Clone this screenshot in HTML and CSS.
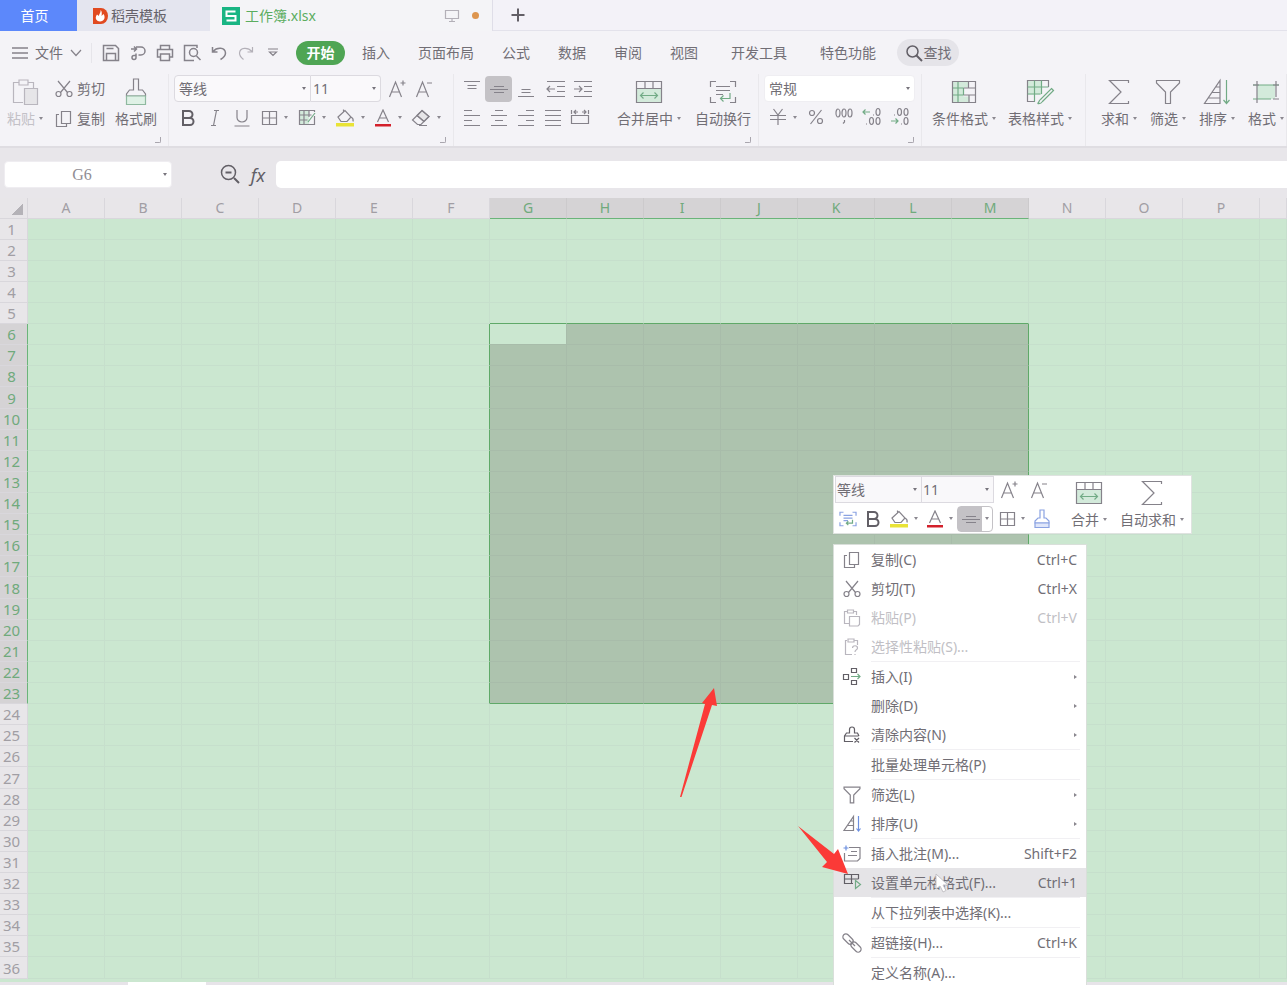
FILE: index.html
```html
<!DOCTYPE html>
<html lang="zh-CN">
<head>
<meta charset="utf-8">
<title>工作簿.xlsx</title>
<link rel="stylesheet" href="styles.css">
</head>
<body>
<svg class="defs" aria-hidden="true">
  <symbol id="i-copy" viewBox="0 0 18 18"><path d="M6.500 1.500h9v12h-9zM4 4.500H1.500v12h10v-3"/></symbol>
  <symbol id="i-cut" viewBox="0 0 18 18"><path d="M3 1l9.500 11.500M15 1L5.500 12.500"/><circle cx="3.500" cy="14" r="2.500"/><circle cx="14.500" cy="14" r="2.500"/></symbol>
  <symbol id="i-brush" viewBox="0 0 22 28"><path d="M8.500 1h5v11h4l3 4v2h-19v-2l3-4h4z"/><path class="pad" d="M1.500 18h19v8.500h-19z"/></symbol>
  <symbol id="i-bold" viewBox="0 0 18 18"><path class="thick" d="M4 2h6a3.500 3.500 0 0 1 0 7H4zM4 9h7a3.500 3.500 0 0 1 0 7H4z"/></symbol>
  <symbol id="i-grid" viewBox="0 0 18 18"><path d="M2.500 2.500h14v13h-14zM9.500 2.500v13M2.500 9h14"/></symbol>
  <symbol id="i-fill" viewBox="0 0 20 18"><path d="M3 8l7-6.500 6 6.500-4 4.500H6zM8.500 3V.5M16 8c2 1 2.500 2.500 2 4.500"/><path class="yellow" d="M1 14h18v3.500H1z"/></symbol>
  <symbol id="i-color" viewBox="0 0 18 18"><path d="M3.500 13L9 1l5.500 12M5.500 9h7"/><path class="red" d="M1 15h16v2.500H1z"/></symbol>
  <symbol id="i-up" viewBox="0 0 18 18"><path d="M1.500 17L7.500 2l6 15M3.500 12h8M12.500 3h5M15 .5v5"/></symbol>
  <symbol id="i-down" viewBox="0 0 18 18"><path d="M1.500 17L7.500 2l6 15M3.500 12h8M12 3h5"/></symbol>
  <symbol id="i-mid" viewBox="0 0 18 18"><path d="M4 6.500h10M0 9.500h18M4 12.500h10"/></symbol>
  <symbol id="i-merge" viewBox="0 0 28 24"><path class="mint" d="M1.500 9h25v13.500h-25z"/><path d="M1.500 1.500h25v21h-25zM1.500 8.500h25M10 1.500v7M18 1.500v7"/><path class="g" d="M5.500 15.500h17M8.500 12.500l-3 3 3 3M19.500 12.500l3 3-3 3"/></symbol>
  <symbol id="i-wrap" viewBox="0 0 28 24"><path d="M1.500 7V1.500H7M21 1.500h5.500V7M1.500 17v5.500H7M21 22.500h5.500V17M7 6.500h14M7 10.500h14M7 14.500h7"/><path class="g" d="M21 13v5.500H11.500M14.500 15.500l-3 3 3 3"/></symbol>
  <symbol id="i-sum" viewBox="0 0 24 26"><path d="M21.500 4V1.500H2.500L14 13 2.500 24.500h19V22"/></symbol>
  <symbol id="i-filter" viewBox="0 0 26 26"><path d="M1.500 1.500h23v2.500l-9 9v11.500h-5V13l-9-9z"/></symbol>
  <symbol id="i-sort" viewBox="0 0 28 26"><path d="M17 1.500v23H1.500zM13 8h4M9 13.500h8M5 19h12"/><path class="g" d="M23.500 1v23M20.500 21l3 3.500 3-3.500"/></symbol>
  <symbol id="i-paste" viewBox="0 0 27 28"><path d="M7 4.500H1.500v20H11M16 4.500h5.500V10M7 2h9v5H7z"/><path class="soft" d="M12.500 10.500H25.500v16h-13z"/></symbol>
</svg>

<div class="app">
  <header class="tabs">
    <button class="tab home">首页</button>
    <button class="tab docer"><svg width="16" height="18" viewBox="0 0 16 18"><path d="M1 1h8a7 8 0 0 1 0 16H1z" fill="#e14a20"/><path d="M8.500 3c.5 3-1.500 3.500-1.500 6L5 7.500c-3 4 0 7 3 7 4 0 6-4 3.500-7.500L9.500 9C10 6.500 10 4 8.500 3z" fill="#fff"/></svg>稻壳模板</button>
    <button class="tab book"><svg width="18" height="18" viewBox="0 0 18 18"><path d="M0 0h18v18H0z" fill="#19b583"/><path d="M13.500 4.500h-9V9h9v4.500h-9" fill="none" stroke="#fff" stroke-width="2"/></svg><span>工作簿.xlsx</span><svg class="ico pale" width="14" height="14" viewBox="0 0 14 14"><path d="M.5 1.500h13v8H.5zM7 9.500v3M4 12.500h6"/></svg><i class="dot"></i></button>
    <button class="plus" aria-label="新建"><svg class="ico dark" width="14" height="14" viewBox="0 0 14 14"><path d="M7 .5v13M.5 7h13" stroke-width="2"/></svg></button>
  </header>

  <nav class="menubar">
    <button class="file"><svg class="ico" width="16" height="12" viewBox="0 0 16 12"><path d="M0 1h16M0 6h16M0 11h16" stroke-width="1.500"/></svg>文件<svg class="ico" width="12" height="8" viewBox="0 0 12 8"><path d="M1 1l5 5.500L11 1"/></svg></button>
    <div class="quick">
      <button aria-label="保存"><svg class="ico" width="18" height="18" viewBox="0 0 18 18"><path d="M1.500 1.500h12l3 3v12h-15zM4.500 16.500v-7h9v7M4.500 4.500h7" stroke-width="1.500"/></svg></button>
      <button aria-label="输出"><svg class="ico" width="18" height="18" viewBox="0 0 18 18"><path d="M2 5h5M5 2.500L7.500 5 5 7.500M7 3h5a4 4 0 0 1 0 8H9.500M7 9.500v4a2 2 0 1 1-2-2h2" stroke-width="1.500"/></svg></button>
      <button aria-label="打印"><svg class="ico" width="18" height="18" viewBox="0 0 18 18"><path d="M4.500 5V1.500h9V5M4 13H1.500V5.500h15V13H14M4.500 10h9v6.500h-9z" stroke-width="1.500"/></svg></button>
      <button aria-label="打印预览"><svg class="ico" width="18" height="18" viewBox="0 0 18 18"><path d="M14 4V1.500H1.500v15H11M13.500 12l4 4" stroke-width="1.500"/><circle cx="10.500" cy="8.500" r="4" stroke-width="1.500"/></svg></button>
      <button aria-label="撤销"><svg class="ico" width="18" height="18" viewBox="0 0 18 18"><path d="M2.500 3v5h5M3 7.500C7 3 15 3 15.500 9c0 3-2.500 5-5 6.500" stroke-width="1.500"/></svg></button>
      <button aria-label="恢复"><svg class="ico pale" width="18" height="18" viewBox="0 0 18 18"><path d="M15.500 3v5h-5M15 7.500C11 3 3 3 2.500 9c0 3 2 5 4 6.500"/></svg></button>
      <button aria-label="更多"><svg class="ico" width="10" height="9" viewBox="0 0 10 9"><path d="M0 1h10M1.500 4L5 7.500 8.500 4z"/></svg></button>
    </div>
    <button class="start">开始</button>
    <div class="menus">
      <button>插入</button><button>页面布局</button><button>公式</button><button>数据</button><button>审阅</button><button>视图</button><button class="wide">开发工具</button><button class="wide">特色功能</button>
    </div>
    <button class="search"><svg class="ico dark" width="18" height="18" viewBox="0 0 18 18"><circle cx="7.500" cy="7.500" r="5.500" stroke-width="1.500"/><path d="M11.500 11.500l5.500 5.500" stroke-width="2"/></svg>查找</button>
  </nav>

  <section class="ribbon">
    <div class="group clip corner">
      <button class="big off"><svg class="ico" width="27" height="28"><use href="#i-paste"/></svg><span class="car">粘贴</span></button>
      <div class="stack"><button class="line"><svg class="ico" width="18" height="18"><use href="#i-cut"/></svg>剪切</button><button class="line"><svg class="ico" width="18" height="18"><use href="#i-copy"/></svg>复制</button></div>
      <button class="big"><svg class="ico" width="22" height="28"><use href="#i-brush"/></svg>格式刷</button>
    </div>

    <div class="group font corner">
      <div class="stack">
        <div class="row">
          <span class="combo family"><select aria-label="字体"><option>等线</option></select></span><span class="combo size"><select aria-label="字号"><option>11</option></select></span>
          <button class="tool" aria-label="增大字号"><svg class="ico" width="18" height="18"><use href="#i-up"/></svg></button>
          <button class="tool" aria-label="减小字号"><svg class="ico" width="18" height="18"><use href="#i-down"/></svg></button>
        </div>
        <div class="row">
          <button class="tool dark" aria-label="加粗"><svg class="ico" width="18" height="18"><use href="#i-bold"/></svg></button>
          <button class="tool" aria-label="倾斜"><svg class="ico" width="18" height="18" viewBox="0 0 18 18"><path d="M8 1.500h5M5 16.500h5M10.500 1.500l-3 15"/></svg></button>
          <button class="tool" aria-label="下划线"><svg class="ico" width="18" height="18" viewBox="0 0 18 18"><path d="M4 1v7.500a5 4.500 0 0 0 10 0V1M1.500 17h15"/></svg></button>
          <button class="tool car" aria-label="边框"><svg class="ico" width="18" height="18"><use href="#i-grid"/></svg></button>
          <button class="tool car" aria-label="绘制边框"><svg class="ico" width="18" height="18" viewBox="0 0 18 18"><path class="mint" d="M2 2h9v13H2z"/><path d="M16.500 7v8.500h-15v-14h15V3M1.500 6h12M1.500 11h8M6 1.500v14M11 1.500V8"/><path class="g" d="M17 4l-7 9"/></svg></button>
          <button class="tool car" aria-label="填充颜色"><svg class="ico" width="20" height="18"><use href="#i-fill"/></svg></button>
          <button class="tool car" aria-label="字体颜色"><svg class="ico" width="18" height="18"><use href="#i-color"/></svg></button>
          <button class="tool car" aria-label="清除"><svg class="ico" width="20" height="18" viewBox="0 0 20 18"><path class="soft" d="M11 1.500l7 6-5 5-7-6z"/><path d="M11 1.500l7 6-8 8H6.500l-5-4.500zM6 6.500l7 6M8 16.500h8"/></svg></button>
        </div>
      </div>
    </div>

    <div class="group align corner">
      <div class="stack">
        <div class="row">
          <button class="al" aria-label="顶端对齐"><svg class="ico" width="18" height="18" viewBox="0 0 18 18"><path d="M1 1.500h16M4.500 5.500h9M4.500 8.500h9"/></svg></button>
          <button class="al on" aria-label="垂直居中"><svg class="ico" width="18" height="18"><use href="#i-mid"/></svg></button>
          <button class="al" aria-label="底端对齐"><svg class="ico" width="18" height="18" viewBox="0 0 18 18"><path d="M4.500 9.500h9M4.500 12.500h9M1 16.500h16"/></svg></button>
          <button class="al indent" aria-label="减少缩进"><svg class="ico" width="18" height="18" viewBox="0 0 18 18"><path d="M0 1.500h18M10 6.500h8M10 11.500h8M0 16.500h18M0 9h8M3 6L0 9l3 3"/></svg></button>
          <button class="al" aria-label="增加缩进"><svg class="ico" width="18" height="18" viewBox="0 0 18 18"><path d="M0 1.500h18M10 6.500h8M10 11.500h8M0 16.500h18M0 9h8M5 6l3 3-3 3"/></svg></button>
        </div>
        <div class="row">
          <button class="al" aria-label="左对齐"><svg class="ico" width="18" height="18" viewBox="0 0 18 18"><path d="M1 1.500h8M1 6.500h16M1 11.500h8M1 16.500h16"/></svg></button>
          <button class="al" aria-label="居中"><svg class="ico" width="18" height="18" viewBox="0 0 18 18"><path d="M5 1.500h8M1 6.500h16M5 11.500h8M1 16.500h16"/></svg></button>
          <button class="al" aria-label="右对齐"><svg class="ico" width="18" height="18" viewBox="0 0 18 18"><path d="M9 1.500h8M1 6.500h16M9 11.500h8M1 16.500h16"/></svg></button>
          <button class="al" aria-label="两端对齐"><svg class="ico" width="18" height="18" viewBox="0 0 18 18"><path d="M1 1.500h16M1 6.500h16M1 11.500h16M1 16.500h16"/></svg></button>
          <button class="al" aria-label="分散对齐"><svg class="ico" width="18" height="18" viewBox="0 0 18 18"><path d="M.5 1v4M17.500 1v4M.5 6.500h17v8H.5zM3 3h4M11 3h4M5 1L3 3l2 2M13 1l2 2-2 2"/></svg></button>
        </div>
      </div>
      <button class="big"><svg class="ico" width="28" height="24"><use href="#i-merge"/></svg><span class="car">合并居中</span></button>
      <button class="big"><svg class="ico" width="28" height="24"><use href="#i-wrap"/></svg>自动换行</button>
    </div>

    <div class="group number corner">
      <div class="stack">
        <div class="row"><span class="combo format"><select aria-label="数字格式"><option>常规</option></select></span></div>
        <div class="row nums">
          <button class="tool car" aria-label="货币"><svg class="ico" width="18" height="18" viewBox="0 0 18 18"><path d="M4.500 0L9 6l4.500-6M1 6.500h16M1 10.500h16M9 6v10"/></svg></button>
          <button class="tool" aria-label="百分比"><svg class="ico" width="16" height="18" viewBox="0 0 16 18"><circle cx="4" cy="4" r="2.500"/><circle cx="12" cy="12" r="2.500"/><path d="M13.500 1l-11 14"/></svg></button>
          <button class="tool" aria-label="千位分隔"><svg class="ico" width="20" height="18" viewBox="0 0 20 18"><ellipse cx="4" cy="4" rx="2" ry="4"/><ellipse cx="10" cy="4" rx="2" ry="4"/><ellipse cx="16" cy="4" rx="2" ry="4"/><path d="M10.500 11v2L9 14.500"/></svg></button>
          <button class="tool" aria-label="增加小数位"><svg class="ico" width="20" height="20" viewBox="0 0 20 20"><path class="g" d="M1 4h7M3.500 1.500L1 4l2.500 2.500"/><path d="M11 7h1M4 16h1"/><ellipse cx="16" cy="4" rx="2" ry="3.500"/><ellipse cx="9.500" cy="13" rx="2" ry="3.500"/><ellipse cx="16" cy="13" rx="2" ry="3.500"/></svg></button>
          <button class="tool" aria-label="减少小数位"><svg class="ico" width="20" height="20" viewBox="0 0 20 20"><path class="g" d="M1 13h7M5.500 10.500L8 13l-2.500 2.500"/><path d="M4 7h1M11 16h1"/><ellipse cx="9.500" cy="4" rx="2" ry="3.500"/><ellipse cx="16" cy="4" rx="2" ry="3.500"/><ellipse cx="16" cy="13" rx="2" ry="3.500"/></svg></button>
        </div>
      </div>
    </div>

    <div class="group styles">
      <button class="big"><svg class="ico" width="26" height="24" viewBox="0 0 26 24"><path class="mint" d="M1.500 1.500h16v6h-5v9h6v6h-17z"/><path class="g" d="M1.500 8h11M1.500 15h11M7 1.500v21M12.500 8v7"/><path d="M1.500 1.500h23v21h-23zM17.500 1.500V8M12.500 8h12M12.500 15h12M18 15v7.500"/></svg><span class="car">条件格式</span></button>
      <button class="big"><svg class="ico" width="28" height="26" viewBox="0 0 28 26"><path class="mint" d="M1.500 1.500h14v14h-14z"/><path d="M9 22.500H1.500v-21h21V8"/><path class="g" d="M1.500 8h21M1.500 15h13M8.500 1.500v21M15.500 1.500V15M25.500 9.500l2 2-11 11c-2 3-4 2-5 2 2-1 1-3 3-4z"/></svg><span class="car">表格样式</span></button>
    </div>

    <div class="group edit">
      <button class="big"><svg class="ico" width="24" height="26"><use href="#i-sum"/></svg><span class="car">求和</span></button>
      <button class="big"><svg class="ico" width="26" height="26"><use href="#i-filter"/></svg><span class="car">筛选</span></button>
      <button class="big"><svg class="ico" width="28" height="26"><use href="#i-sort"/></svg><span class="car">排序</span></button>
      <button class="big"><svg class="ico" width="28" height="24" viewBox="0 0 28 24"><path class="mint" d="M5 5h18v14H5z"/><path class="g" d="M1 5h26M1 19h18"/><path d="M5 1v22M24 1v16M21 19h6M1 5h6M21 5h6"/></svg><span class="car">格式</span></button>
    </div>
  </section>

  <section class="formula">
    <span class="combo name"><input aria-label="名称框" value="G6"></span>
    <button class="zoomer" aria-label="缩小"><svg class="ico dark" width="20" height="20" viewBox="0 0 20 20"><circle cx="8.500" cy="7.500" r="7" stroke-width="1.500"/><path d="M14 13l5 5M5.500 7.500h6" stroke-width="2"/></svg></button>
    <button class="fx">fx</button>
    <input class="entry" aria-label="编辑栏">
  </section>

  <main class="work">
    <div class="viewport"><table class="sheet"><thead></thead><tbody></tbody></table></div>
    <footer class="sheets"><div class="sheet-tab"></div></footer>

    <div class="mini">
      <div class="stack">
        <div class="row"><span class="combo mfont"><select aria-label="浮动字体"><option>等线</option></select></span><span class="combo msize"><select aria-label="浮动字号"><option>11</option></select></span>
          <button class="tool" aria-label="增大"><svg class="ico" width="18" height="18"><use href="#i-up"/></svg></button>
          <button class="tool" aria-label="减小"><svg class="ico" width="18" height="18"><use href="#i-down"/></svg></button></div>
        <div class="row">
          <button class="tool" aria-label="换行"><svg class="ico blue" width="18" height="16"><use href="#i-wrap"/></svg></button>
          <button class="tool dark" aria-label="粗体"><svg class="ico" width="18" height="18"><use href="#i-bold"/></svg></button>
          <button class="tool car" aria-label="填充"><svg class="ico" width="20" height="18"><use href="#i-fill"/></svg></button>
          <button class="tool car" aria-label="颜色"><svg class="ico" width="18" height="18"><use href="#i-color"/></svg></button>
          <button class="tool car on" aria-label="对齐"><svg class="ico" width="18" height="18"><use href="#i-mid"/></svg></button>
          <button class="tool car" aria-label="框线"><svg class="ico" width="18" height="18"><use href="#i-grid"/></svg></button>
          <button class="tool" aria-label="格式刷"><svg class="ico blue" width="16" height="20" viewBox="0 0 16 20"><path d="M6 1h4v8h2l3 3v2H1v-2l3-3h2z"/><path d="M1 14h14v4.500H1z" fill="#dfe6fa"/></svg></button>
        </div>
      </div>
      <button class="big"><svg class="ico" width="28" height="24"><use href="#i-merge"/></svg><span class="car">合并</span></button>
      <button class="big"><svg class="ico" width="24" height="26"><use href="#i-sum"/></svg><span class="car">自动求和</span></button>
    </div>

    <div class="menu" role="menu">
      <button role="menuitem"><svg class="ico" width="18" height="18"><use href="#i-copy"/></svg><span>复制(C)</span><kbd>Ctrl+C</kbd></button>
      <button role="menuitem"><svg class="ico" width="18" height="18"><use href="#i-cut"/></svg><span>剪切(T)</span><kbd>Ctrl+X</kbd></button>
      <button role="menuitem" class="off"><svg class="ico" width="18" height="18" viewBox="0 0 18 18"><path d="M5 2.500H1.500v12H6M10 2.500h3.500V6M4.500 1h6v3h-6zM6.500 7.500h10v8l-1.500 1.500h-8.500z"/></svg><span>粘贴(P)</span><kbd>Ctrl+V</kbd></button>
      <button role="menuitem" class="off"><svg class="ico" width="18" height="18" viewBox="0 0 18 18"><path d="M4 2.500H2.500v14H9M11 2.500h3.500V7M5 1h6v3H5zM9.500 10c0-3 5-3 5 0 0 2-2.500 1.500-2.500 4M12 16v1"/></svg><span>选择性粘贴(S)...</span></button>
      <hr>
      <button role="menuitem"><svg class="ico dark" width="18" height="18" viewBox="0 0 18 18"><path d="M8.500.5h5v4h-5zM.5 6.500h5v5h-5zM8.500 12.500h5v4h-5z"/><path class="g" d="M8 8.500h9M14.500 6l2.500 2.500-2.500 2.500"/></svg><span>插入(I)</span><b></b></button>
      <button role="menuitem"><i></i><span>删除(D)</span><b></b></button>
      <button role="menuitem"><svg class="ico dark" width="18" height="18" viewBox="0 0 18 18"><path d="M10 15.500H1.500V10l2-3h3V3.500a2.500 2.500 0 0 1 5 0V7h3l1.500 3M1.500 10h14M11.500 12l4.500 4.500M16 12l-4.500 4.500"/></svg><span>清除内容(N)</span><b></b></button>
      <hr>
      <button role="menuitem"><i></i><span>批量处理单元格(P)</span></button>
      <hr>
      <button role="menuitem"><svg class="ico" width="18" height="18"><use href="#i-filter"/></svg><span>筛选(L)</span><b></b></button>
      <button role="menuitem"><svg class="ico" width="18" height="18" viewBox="0 0 18 18"><path d="M10.500 1.500v14H1zM7.500 6h3M5 10.500h5.500"/><path class="b" d="M15.500 1v15M13.500 13.500l2 2.500 2-2.500"/></svg><span>排序(U)</span><b></b></button>
      <hr>
      <button role="menuitem"><svg class="ico" width="18" height="18" viewBox="0 0 18 18"><path d="M6 2.500h11v11L14.500 16H1.500V8M8 6.500h6M5 10.500h9"/><path class="b" d="M3 .5v5M.5 3h5"/></svg><span>插入批注(M)...</span><kbd>Shift+F2</kbd></button>
      <button role="menuitem" class="hot"><svg class="ico dark" width="20" height="18" viewBox="0 0 20 18"><path d="M10 9.500H1.500v-9h14V5M8.500.5v9M1.500 5h14"/><path class="g" d="M12.500 6.500l5 4-5 4z"/></svg><span>设置单元格格式(F)...</span><kbd>Ctrl+1</kbd></button>
      <hr>
      <button role="menuitem"><i></i><span>从下拉列表中选择(K)...</span></button>
      <hr>
      <button role="menuitem"><svg class="ico" width="18" height="18" viewBox="0 0 18 18"><rect x="-1" y="2" width="12" height="6" rx="3" transform="rotate(45 5 5)"/><rect x="7" y="10" width="12" height="6" rx="3" transform="rotate(45 13 13)"/><path d="M6 6l6 6"/></svg><span>超链接(H)...</span><kbd>Ctrl+K</kbd></button>
      <hr>
      <button role="menuitem"><i></i><span>定义名称(A)...</span></button>
    </div>

    <svg class="mark one" width="40" height="112" viewBox="0 0 40 112"><path d="M0 109L25 16l-3-1L34 0l3 18-5-1L1.500 109z" fill="#fb3a37"/></svg>
    <svg class="mark two" width="52" height="50" viewBox="0 0 52 50"><path d="M1 0l36 28 4-5 10 25-26-7 5-5z" fill="#fb3a37"/></svg>
    <svg class="mark pointer" width="14" height="20" viewBox="0 0 14 20"><path d="M1 1v15l4-3 3 6 3-1.500L8 12h5z" fill="#fff" stroke="#c3c1c5"/></svg>
  </main>
</div>
<script src="sheet.js"></script>
</body>
</html>
```

FILE: styles.css
```css
* { box-sizing: border-box; }
body { margin: 0; background: #f4f3f7; color: #716e75; font: 14px/20px "Noto Sans", "Noto Sans CJK SC", sans-serif; }
button, select, input { font: inherit; color: inherit; border: 0; background: none; padding: 0; margin: 0; }
button { display: flex; align-items: center; justify-content: center; white-space: nowrap; }
svg { flex: none; }
.defs { position: absolute; width: 0; height: 0; }
.app { display: flex; flex-direction: column; height: 100vh; overflow: hidden; }

.ico { fill: none; stroke: #85828a; stroke-width: 1.2; overflow: visible; }
.ico * { vector-effect: non-scaling-stroke; }
symbol * { vector-effect: non-scaling-stroke; }
.ico.dark, .dark .ico { stroke: #625f66; }
.ico.pale { stroke: #b3b0b8; }
.thick { stroke-width: 2; }
.g { fill: none; stroke: #72ab86; }
.b { stroke: #6c8fe0; }
.mint { fill: #d3eadb; stroke: none; }
.pad { fill: #dff1e6; stroke: #8fb9a0; }
.soft { fill: #e6e5e8; }
.yellow { fill: #e9e336; stroke: none; }
.red { fill: #d3202b; stroke: none; }
.ico.blue { stroke: #8aa2e2; }

/* document tabs */
.tabs { display: flex; height: 31px; flex: none; background: #f3f2f8; border-bottom: 1px solid #e3e2eb; }
.tab { height: 31px; }
.home { width: 77px; padding-right: 8px; background: #5c88fb; color: #fff; }
.docer { width: 133px; justify-content: flex-start; gap: 3px; padding-left: 15px; background: #e4e5ef; color: #65626a; }
.book { width: 283px; justify-content: flex-start; gap: 5px; padding-left: 12px; background: #f4f4f7; color: #5bad5f; border-right: 1px solid #dfdee8; }
.book .pale { margin-left: auto; }
.dot { width: 7px; height: 7px; border-radius: 50%; background: #dd954f; margin: 0 13px 0 8px; }
.plus { width: 50px; height: 30px; }

/* menu bar */
.menubar { display: flex; align-items: center; height: 43px; flex: none; }
.file { gap: 7px; padding: 0 9px 0 12px; border-right: 1px solid #e6e5ea; }
.quick { display: flex; padding: 0 0 0 5px; }
.quick button { width: 27px; height: 24px; }
.start { width: 49px; height: 24px; margin-left: 10px; border-radius: 12px; background: #4fa554; color: #fff; font-weight: 700; }
.menus { display: flex; gap: 28px; padding-left: 17px; }
.menus .wide { margin-left: 5px; }
.search { width: 62px; height: 27px; margin-left: 21px; gap: 1px; border-radius: 14px; background: #e5e4e9; }

/* ribbon */
.ribbon { display: flex; flex: none; height: 74px; border-bottom: 2px solid #dfdde2; overflow: hidden; }
.group { display: flex; flex: none; position: relative; border-right: 1px solid #e9e8ec; }
.corner::after { content: ""; position: absolute; right: 7px; bottom: 3px; width: 5px; height: 5px; border: solid #a9a6ae; border-width: 0 1px 1px 0; border-radius: 0 0 2px 0; }
.stack { display: flex; flex-direction: column; gap: 2px; padding-top: 1px; }
.row { display: flex; align-items: center; height: 27px; }
.big { flex-direction: column; justify-content: flex-start; gap: 3px; padding-top: 4px; height: 60px; }
.big .ico { height: 28px; }
.off { color: #c3c1c7; }
.off .ico { stroke: #b9b6be; }
.line { height: 28px; gap: 4px; }
.car::after { content: ""; display: inline-block; vertical-align: middle; margin: 0 0 4px 4px; border: solid transparent; border-width: 3px 2px 0; border-top-color: #8b8890; }
.clip { width: 169px; padding-left: 7px; }
.clip .stack { margin: 0 10px 0 12px; }
.font { width: 285px; padding-left: 5px; }
.tool { width: 27px; height: 26px; }
.tool.car { width: 38px; }
.tool.car::after { margin-bottom: 0; margin-left: 6px; }
.font .size + .tool { margin-left: 2px; }
.combo { display: flex; position: relative; height: 27px; border: 1px solid #dcdae0; border-radius: 4px; background: #faf9fb; }
.combo select, .combo input { appearance: none; width: 100%; padding: 0 4px; outline: 0; }
.combo::after { content: ""; position: absolute; right: 4px; top: 11px; border: solid transparent; border-width: 3px 2px 0; border-top-color: #77747c; }
.family { width: 137px; border-radius: 4px 0 0 4px; }
.size { width: 70px; border-left: 0; border-radius: 0 4px 4px 0; }
.size select { padding: 0 2px; }
.align { width: 305px; padding-left: 4px; }
.al { width: 27px; height: 26px; }
.al.on, .tool.on { background: #c4c2c6; border-radius: 4px; }
.indent { margin-left: 3px; }
.align .stack { margin-right: 21px; }
.align .big { margin-right: 14px; }
.number { width: 163px; padding-left: 5px; }
.format { width: 151px; background: #fff; border-color: #efeef2; }
.nums .tool.car { width: 38px; }
.nums .tool { width: 28px; }
.styles { width: 164px; padding-left: 10px; gap: 12px; }
.edit { flex: 1; padding-left: 15px; gap: 13px; }

/* formula bar */
.formula { display: flex; align-items: center; flex: none; height: 50px; padding: 3px 0 0 4px; background: #e8e6ea; }
.name { width: 168px; background: #fff; border-color: #efedf1; }
.name input { padding-right: 16px; text-align: center; font: 16px "Liberation Serif", serif; color: #908d94; }
.zoomer { margin-left: 48px; }
.fx { width: 36px; height: 27px; font: italic 18px/24px "Noto Sans", sans-serif; color: #625f66; }
.entry { flex: 1; height: 27px; background: #fff; border-radius: 5px 0 0 5px; }

/* sheet */
.work { flex: 1; min-height: 0; position: relative; display: flex; flex-direction: column; overflow: hidden; }
.viewport { flex: 1; min-height: 0; overflow: hidden; background: #cbe7d0; }
.sheet { width: 100%; table-layout: fixed; border-collapse: separate; border-spacing: 0; font-size: 15px; line-height: 18px; color: #a19ea4; }
.sheet th, .sheet td { height: 21px; padding: 0; border: solid #c6dfcc; border-width: 0 1px 1px 0; font-weight: 400; overflow: hidden; }
.sheet th { background: #e8e6e9; border-color: #d9d7dc; }
.sheet .num { width: 28px; padding-right: 4px; }
.sheet .col { width: 77px; font-size: 14px; }
.sheet .rest { width: auto; }
.sheet tbody tr:nth-child(9n) > * { height: 22px; }
.sheet th.picked { color: #70aa7c; background: #d5d3d5; }
.sheet .col.picked { border-bottom-color: #6bb47a; border-right-color: #cccacc; }
.sheet .num.picked { border-right-color: #6bb47a; }
.sheet .sel { background: #adc3ae; border-color: #a8bcaa; }
.sheet .sel.first { background: #cbe7d0; }
.sheet .above { border-bottom-color: #5fa968; }
.sheet .before { border-right-color: #5fa968; }
.sheet .last-row { border-bottom-color: #5fa968; }
.sheet .last-col { border-right-color: #5fa968; }
.select-all { width: 11px; height: 11px; margin: 3px 0 0 12px; background: linear-gradient(135deg, transparent 50%, #b4b2b7 50%); }
.sheets { flex: none; height: 3px; padding-left: 128px; background: #e7e4e9; }
.sheet-tab { width: 78px; height: 3px; background: #fff; }

/* floating toolbar */
.mini { position: absolute; left: 833px; top: 277px; display: flex; height: 59px; padding-left: 1px; background: #fff; border: 1px solid #dfe3e0; }
.mini .combo { border-radius: 0; background: #f9f8fa; }
.mini .combo select { padding: 0 1px; }
.mfont { width: 87px; }
.msize { width: 72px; border-left: 0; }
.mini .tool { width: 25px; }
.mini .row:first-child .tool { width: 30px; }
.mini .tool.car { width: 36px; }
.mini .tool.car::after { margin-left: 5px; }
.mini .tool.on { border: 1px solid #c4c2c6; background: linear-gradient(90deg, #c4c2c6 24px, #fff 24px); }
.mini .big { margin-left: 13px; padding-top: 3px; }
.mini .stack { width: 223px; padding: 0; }
.mini .big:last-child { margin-right: 7px; }

/* context menu */
.menu { position: absolute; left: 833px; top: 346px; width: 254px; padding-bottom: 4px; background: #fff; border: 1px solid #d9dfda; }
.menu button { display: grid; grid-template-columns: 20px 1fr auto; gap: 8px; width: 100%; height: 29px; padding: 0 9px 0 9px; text-align: left; }
.menu .off { color: #c1bfc5; }
.menu kbd { font: inherit; }
.menu hr { height: 1px; margin: 0 6px 0 37px; border: 0; background: #f1f0f3; }
.menu .hot { background: #e5e4e7; }
.menu b { border: solid transparent; border-width: 2px 0 2px 3px; border-left-color: #8a878e; }

.mark { position: absolute; }
.one { left: 680px; top: 490px; }
.two { left: 797px; top: 628px; }
.pointer { left: 935px; top: 675px; }
```

FILE: sheet.js
```js
const letters = 'ABCDEFGHIJKLMNOPQRSTUVWXYZ';
const area = { top: 6, bottom: 23, left: 7, right: 13 };
const inside = (n, a, b) => n >= a && n <= b;

// Whole columns and rows that fit the window; a blank column fills the rest.
const view = document.querySelector('.viewport');
const cols = Math.max(13, Math.min(26, Math.floor((view.clientWidth - 28) / 77)));
const rows = Math.max(23, Math.floor((view.clientHeight - 23) * 9 / 190));

let head = '<tr><th class="num"><div class="select-all"></div></th>';
for (let c = 1; c <= cols; c++) {
  const picked = inside(c, area.left, area.right) ? ' picked' : '';
  head += `<th class="col${picked}" scope="col">${letters[c - 1]}</th>`;
}
document.querySelector('.sheet thead').innerHTML = head + '<th class="rest"></th></tr>';

let body = '';
for (let r = 1; r <= rows; r++) {
  const rowIn = inside(r, area.top, area.bottom);
  body += `<tr><th class="num${rowIn ? ' picked' : ''}" scope="row">${r}</th>`;
  for (let c = 1; c <= cols; c++) {
    const colIn = inside(c, area.left, area.right);
    const names = [];
    if (rowIn && colIn) {
      names.push('sel');
      if (r === area.top && c === area.left) names.push('first');
      if (r === area.bottom) names.push('last-row');
      if (c === area.right) names.push('last-col');
    }
    if (colIn && r === area.top - 1) names.push('above');
    if (rowIn && c === area.left - 1) names.push('before');
    body += `<td class="${names.join(' ')}"></td>`;
  }
  body += '<td></td></tr>';
}
document.querySelector('.sheet tbody').innerHTML = body;
```
